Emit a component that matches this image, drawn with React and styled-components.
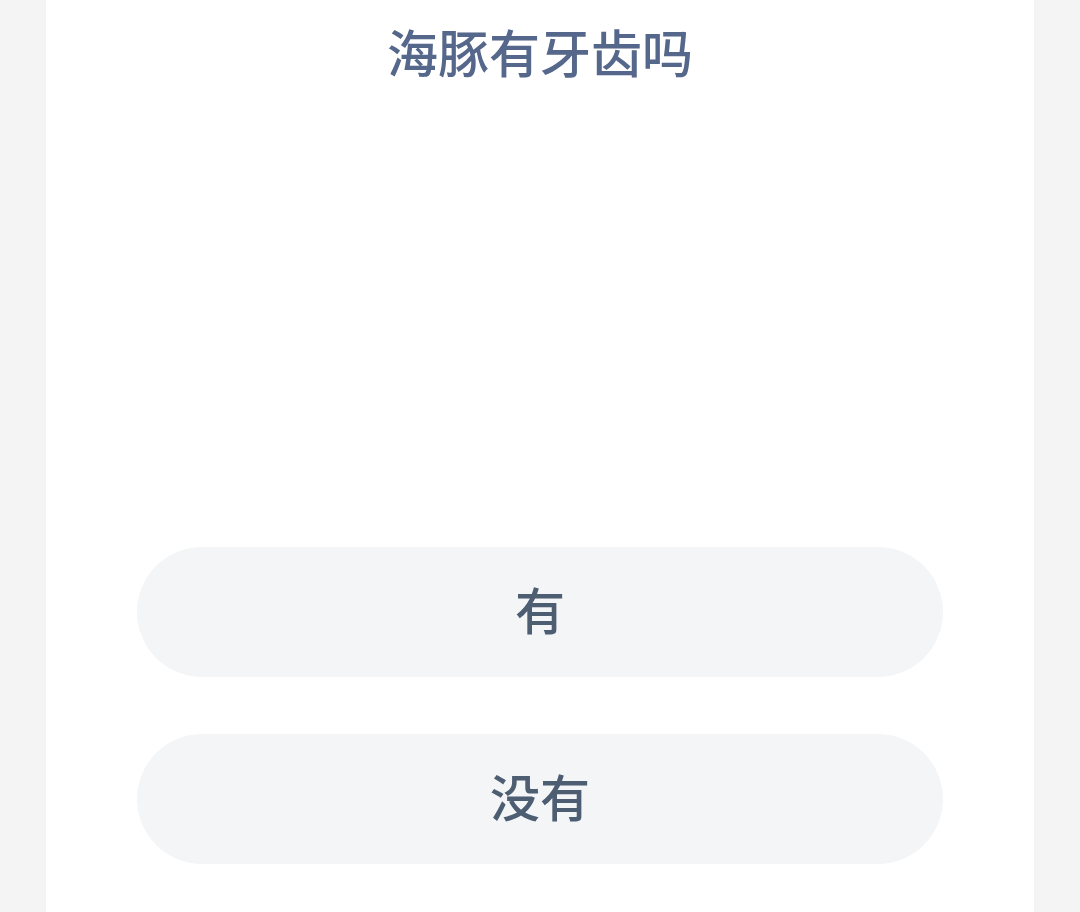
import React from "react";
import styled, { createGlobalStyle } from "styled-components";

const Global = createGlobalStyle`
  html, body { margin: 0; padding: 0; background: #f4f4f4; }
  body { font-family: "Noto Sans CJK SC", "Noto Sans", sans-serif; }
`;

const Page = styled.div`
  width: 1080px;
  height: 912px;
  background: #f4f4f4;
  display: flex;
  justify-content: center;
  overflow: hidden;
`;

const Card = styled.div`
  width: 988px;
  height: 912px;
  background: #ffffff;
  display: flex;
  flex-direction: column;
  align-items: center;
`;

const Title = styled.h1`
  margin: 17px 0 0;
  font-size: 51px;
  line-height: 68px;
  font-weight: 500;
  color: #55678a;
  letter-spacing: 0;
`;

const Options = styled.div`
  margin-top: 462px;
  display: flex;
  flex-direction: column;
  gap: 57px;
`;

const Option = styled.button`
  width: 806px;
  height: 130px;
  border: none;
  border-radius: 65px;
  background: #f3f5f7;
  color: #4d5d72;
  font-family: "Noto Sans CJK SC", "Noto Sans", sans-serif;
  font-size: 50px;
  font-weight: 500;
  padding: 0 0 8px;
  display: flex;
  align-items: center;
  justify-content: center;
  cursor: pointer;
`;

export default function App() {
  return (
    <Page>
      <Global />
      <Card>
        <Title>海豚有牙齿吗</Title>
        <Options>
          <Option>有</Option>
          <Option>没有</Option>
        </Options>
      </Card>
    </Page>
  );
}
